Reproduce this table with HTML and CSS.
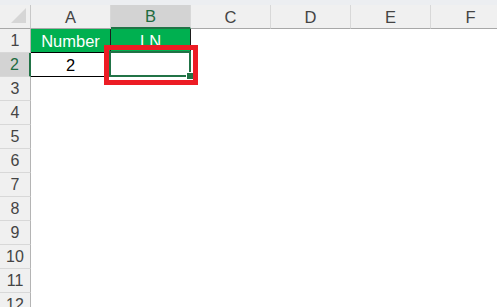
FILE: index.html
```html
<!DOCTYPE html>
<html lang="en">
<head>
    <meta charset="UTF-8" />
    <title>Sheet1</title>
    <link rel="stylesheet" href="styles.css">
</head>
<body>

<div class="ribbon-edge"></div>

<div class="sheet">
    <!-- column headers -->
    <div class="corner">
        <svg width="16" height="16" viewBox="0 0 16 16"><polygon points="15,0 15,15 0,15" fill="#d6d6d6"/></svg>
    </div>
    <div class="col-head">A</div>
    <div class="col-head active">B</div>
    <div class="col-head">C</div>
    <div class="col-head">D</div>
    <div class="col-head">E</div>
    <div class="col-head">F</div>

    <!-- row 1 -->
    <div class="row-head">1</div>
    <div class="cell title first">Number</div>
    <div class="cell title">LN</div>
    <div class="cell"></div><div class="cell"></div><div class="cell"></div><div class="cell"></div>

    <!-- row 2 -->
    <div class="row-head active">2</div>
    <div class="cell value first">2</div>
    <div class="cell value selected"><span class="fill-handle"></span></div>
    <div class="cell"></div><div class="cell"></div><div class="cell"></div><div class="cell"></div>

    <div class="row-head">3</div><div class="cell blank-row"></div>
    <div class="row-head">4</div><div class="cell blank-row"></div>
    <div class="row-head">5</div><div class="cell blank-row"></div>
    <div class="row-head">6</div><div class="cell blank-row"></div>
    <div class="row-head">7</div><div class="cell blank-row"></div>
    <div class="row-head">8</div><div class="cell blank-row"></div>
    <div class="row-head">9</div><div class="cell blank-row"></div>
    <div class="row-head">10</div><div class="cell blank-row"></div>
    <div class="row-head">11</div><div class="cell blank-row"></div>
    <div class="row-head">12</div><div class="cell blank-row"></div>

    <!-- red highlight around the formula cell -->
    <div class="highlight"></div>
</div>

</body>
</html>
```

FILE: styles.css
```css
html, body {
    margin: 0;
    padding: 0;
    height: 100%;
    overflow: hidden;
    background: #fff;
    font-family: 'Liberation Sans', Arial, sans-serif;
}

.ribbon-edge {
    height: 5px;
    background: #eceef1;
}

.sheet {
    position: relative;
    display: grid;
    grid-template-columns: 31px repeat(6, 80px);
    grid-auto-rows: 24px;
}

/* HEADERS */
.corner,
.col-head,
.row-head {
    box-sizing: border-box;
    background: #f0f0f0;
    color: #444;
    display: flex;
    align-items: center;
    justify-content: center;
}

.corner {
    border-right: 1px solid #c8c8c8;
    border-bottom: 1px solid #a8a8a8;
    align-items: flex-end;
    justify-content: flex-end;
    padding: 0 3px 4px 0;
}

.col-head {
    font-size: 16.5px;
    border-bottom: 1px solid #a8a8a8;
    border-right: 1px solid #d8d8d8;
    padding-top: 1px;
}
.col-head.active {
    background: #d3d3d3;
    color: #1e6b40;
    border-bottom: 2px solid #217346;
}

.row-head {
    grid-column: 1;
    font-size: 16px;
    border-right: 1px solid #b4b4b4;
    border-bottom: 1px solid #d8d8d8;
    padding-top: 1px;
}
.row-head.active {
    background: #d3d3d3;
    color: #1e6b40;
    border-right: 2px solid #217346;
}

/* CELLS */
.cell {
    box-sizing: border-box;
    font-size: 16.5px;
    display: flex;
    align-items: center;
    justify-content: center;
    padding-top: 1px;
}
.blank-row {
    grid-column: 2 / span 6;
}

.title {
    background: #00b050;
    color: #fff;
    border-right: 1px solid #1d1d1d;
    border-bottom: 1px solid #000;
}
.value {
    color: #000;
    border-right: 1px solid #1d1d1d;
    border-bottom: 1px solid #000;
}

.selected {
    position: relative;
}
.selected::before {
    content: "";
    position: absolute;
    left: -2px;
    top: -2px;
    right: -1px;
    bottom: -1px;
    border: 2px solid #217346;
}
.fill-handle {
    position: absolute;
    right: -3px;
    bottom: -3px;
    width: 6px;
    height: 6px;
    background: #217346;
    border-left: 1px solid #fff;
    border-top: 1px solid #fff;
}

.highlight {
    position: absolute;
    left: 104px;
    top: 40px;
    width: 94px;
    height: 40px;
    box-sizing: border-box;
    border: 5px solid #ec1c24;
}
```
